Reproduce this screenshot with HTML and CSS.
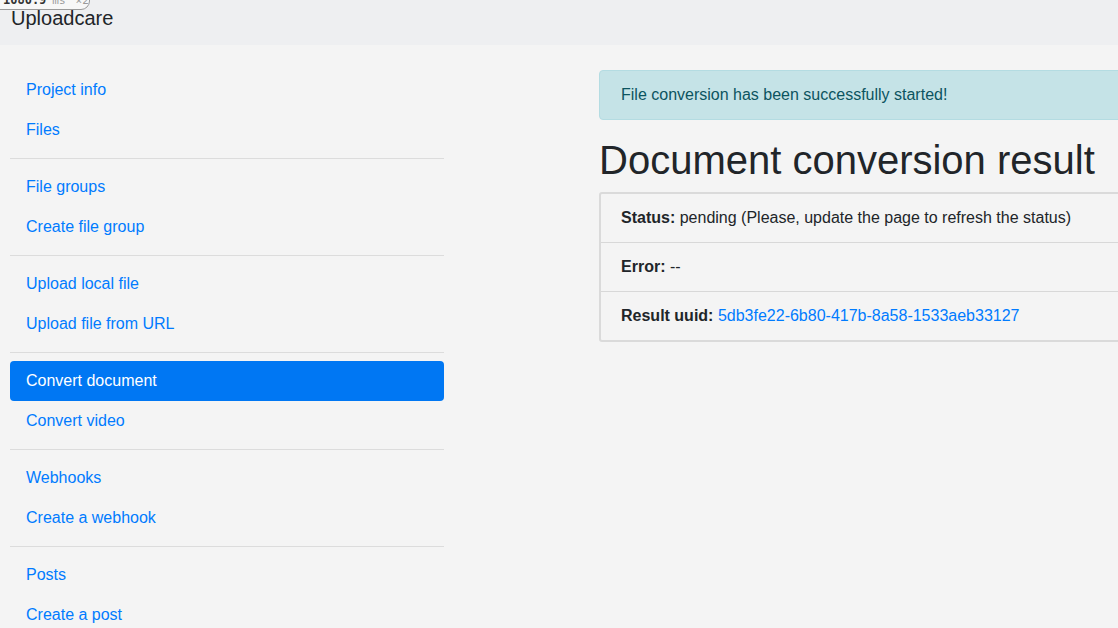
FILE: index.html
```html
<!DOCTYPE html>
<html lang="en">
<head>
<meta charset="utf-8">
<title>Uploadcare</title>
<link rel="stylesheet" href="styles.css">
</head>
<body>
<div class="perf-badge"><span class="perf-num">1080.9</span><span class="perf-unit">ms</span><span class="perf-unit">×2</span></div>
<header class="navbar">
  <a class="brand" href="#">Uploadcare</a>
</header>
<div class="layout">
  <nav class="sidebar">
    <ul class="nav">
      <li><a class="nav-link" href="#">Project info</a></li>
      <li><a class="nav-link" href="#">Files</a></li>
    </ul>
    <hr class="divider">
    <ul class="nav">
      <li><a class="nav-link" href="#">File groups</a></li>
      <li><a class="nav-link" href="#">Create file group</a></li>
    </ul>
    <hr class="divider">
    <ul class="nav">
      <li><a class="nav-link" href="#">Upload local file</a></li>
      <li><a class="nav-link" href="#">Upload file from URL</a></li>
    </ul>
    <hr class="divider">
    <ul class="nav">
      <li><a class="nav-link active" href="#">Convert document</a></li>
      <li><a class="nav-link" href="#">Convert video</a></li>
    </ul>
    <hr class="divider">
    <ul class="nav">
      <li><a class="nav-link" href="#">Webhooks</a></li>
      <li><a class="nav-link" href="#">Create a webhook</a></li>
    </ul>
    <hr class="divider">
    <ul class="nav">
      <li><a class="nav-link" href="#">Posts</a></li>
      <li><a class="nav-link" href="#">Create a post</a></li>
    </ul>
  </nav>
  <main class="main">
    <div class="alert">File conversion has been successfully started!</div>
    <h1 class="title">Document conversion result</h1>
    <ul class="result">
      <li class="result-row"><b>Status:</b> pending (Please, update the page to refresh the status)</li>
      <li class="result-row"><b>Error:</b> --</li>
      <li class="result-row"><b>Result uuid:</b> <a href="#" class="link">5db3fe22-6b80-417b-8a58-1533aeb33127</a></li>
    </ul>
  </main>
</div>
</body>
</html>
```
FILE: styles.css
```css
* { box-sizing: border-box; }
html, body { margin: 0; padding: 0; }
body {
  background: #f4f4f4;
  font-family: "Liberation Sans", Arial, sans-serif;
  font-size: 16px;
  line-height: 24px;
  color: #212529;
  width: 1118px;
  height: 628px;
  overflow: hidden;
  position: relative;
}
.perf-badge {
  position: absolute;
  top: -9px;
  left: -6px;
  z-index: 5;
  width: 96px;
  height: 19px;
  background: #f7f7f7;
  border: 1px solid #9a9a9a;
  border-radius: 0 0 9px 6px;
  padding: 0 0 0 8px;
  line-height: 17px;
  white-space: nowrap;
  display: flex;
  align-items: baseline;
  gap: 6px;
}
.perf-num { font-family: "DejaVu Sans Mono", monospace; font-weight: bold; color: #333; font-size: 12px; }
.perf-unit { color: #9a9a9a; font-size: 11px; font-family: "DejaVu Sans Mono", monospace; }
.perf-unit + .perf-unit { margin-left: 4px; }
.navbar {
  height: 45px;
  background: #eeeff1;
  padding: 5px 11px;
}
.brand {
  font-size: 20px;
  line-height: 26px;
  color: #212529;
  text-decoration: none;
}
.layout {
  display: flex;
  padding: 0 10px;
  gap: 155px;
}
.sidebar {
  width: 434px;
  flex: none;
  padding-top: 25px;
}
.nav { list-style: none; margin: 0; padding: 0; }
.nav-link {
  display: block;
  padding: 8px 16px;
  color: #007bff;
  text-decoration: none;
  border-radius: 4px;
}
.nav-link.active { background: #0077f3; color: #fff; }
.divider {
  border: 0;
  border-top: 1px solid #dcdcdc;
  margin: 8px 0;
  height: 0;
}
.main {
  width: 640px;
  flex: none;
  padding-top: 25px;
}
.alert {
  background: #c5e3e7;
  border: 1px solid #b4dce2;
  color: #0c5460;
  border-radius: 4px;
  padding: 12px 20px 12px 21px;
  margin-bottom: 16px;
}
.title {
  font-size: 40px;
  font-weight: 500;
  line-height: 48px;
  margin: 0 0 8px 0;
  color: #212529;
}
.result {
  list-style: none;
  margin: 0;
  padding: 0;
  border: 2px solid #dadada;
  border-radius: 3px;
}
.result-row {
  padding: 12px 20px;
  border-top: 1px solid #d8d8d8;
}
.result-row:first-child { border-top: 0; }
.result-row b { font-weight: bold; }
.link { color: #007bff; text-decoration: none; }
```
